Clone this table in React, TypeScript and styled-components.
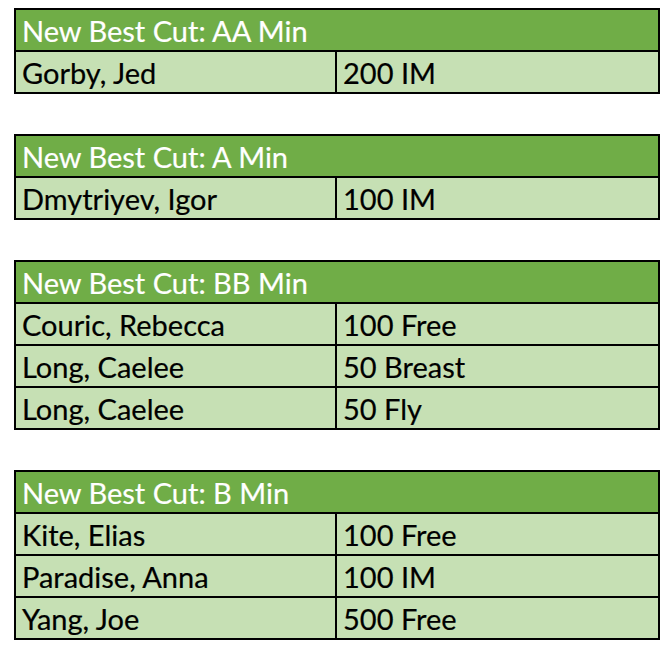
import React from 'react';
import styled, { createGlobalStyle } from 'styled-components';

interface ICut {
  title: string;
  rows: [string, string][];
}

const cuts: ICut[] = [
  { title: 'New Best Cut: AA Min', rows: [['Gorby, Jed', '200 IM']] },
  { title: 'New Best Cut: A Min', rows: [['Dmytriyev, Igor', '100 IM']] },
  {
    title: 'New Best Cut: BB Min',
    rows: [
      ['Couric, Rebecca', '100 Free'],
      ['Long, Caelee', '50 Breast'],
      ['Long, Caelee', '50 Fly'],
    ],
  },
  {
    title: 'New Best Cut: B Min',
    rows: [
      ['Kite, Elias', '100 Free'],
      ['Paradise, Anna', '100 IM'],
      ['Yang, Joe', '500 Free'],
    ],
  },
];

const Global = createGlobalStyle`
  body {
    margin: 0;
    background: #fff;
    font-family: Lato, "Liberation Sans", sans-serif;
  }
`;

/**
 * Stack of the cut tables, one per standard
 */
const App = () => {
  return <Page>
            <Global />
            {cuts.map((cut) => (
              <CutTable key={cut.title}>
                <Header>{cut.title}</Header>
                {cut.rows.map(([name, event], i) => (
                  <Row key={i}>
                    <Cell>{name}</Cell>
                    <Cell divided>{event}</Cell>
                  </Row>
                ))}
              </CutTable>
            ))}
          </Page>;
};

const Page = styled.div`
    padding: 8px 0 0 14px;
    display: flex;
    flex-direction: column;
    gap: 40px;
`
const CutTable = styled.div`
    width: 646px;
    box-sizing: border-box;
    border: 2px solid #000;
    font-size: 29px;
    line-height: 40px;
    -webkit-text-stroke: 0.2px currentColor;
`
const Header = styled.div`
    height: 40px;
    padding: 1px 6px 0;
    box-sizing: border-box;
    background: #70ad47;
    color: #fff;
    white-space: nowrap;
`
const Row = styled.div`
    display: grid;
    grid-template-columns: 319px 1fr;
    border-top: 2px solid #000;
    background: #c6e0b4;
    color: #000;
`
const Cell = styled.div<{ divided?: boolean }>`
    height: 40px;
    padding: 1px 6px 0;
    box-sizing: border-box;
    white-space: nowrap;
    border-left: ${({ divided }) => (divided ? '2px solid #000' : 'none')};
    padding-left: ${({ divided }) => (divided ? '6px' : '6px')};
`
export default App;
